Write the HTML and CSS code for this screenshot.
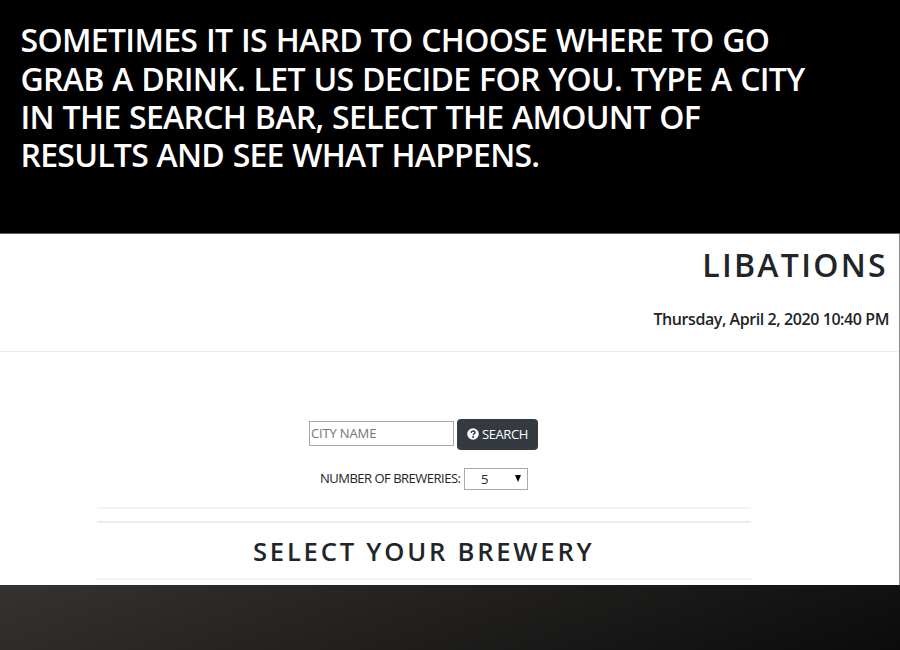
FILE: index.html
```html
<!DOCTYPE html>
<html lang="en">
<head>
<meta charset="utf-8">
<title>Libations</title>
<link rel="stylesheet" href="styles.css">
</head>
<body>
<div class="page">
  <header class="intro">
    <h2 class="intro-text">
      <span class="line line-1">SOMETIMES IT IS HARD TO CHOOSE WHERE TO GO</span>
      <span class="line line-2">GRAB A DRINK. LET US DECIDE FOR YOU. TYPE A CITY</span>
      <span class="line line-3">IN THE SEARCH BAR, SELECT THE AMOUNT OF</span>
      <span class="line line-4">RESULTS AND SEE WHAT HAPPENS.</span>
    </h2>
  </header>
  <section class="brand">
    <h1 class="brand-name">LIBATIONS</h1>
    <p class="date">Thursday, April 2, 2020 10:40 PM</p>
  </section>
  <main class="content">
    <form class="search">
      <div class="search-row">
        <input class="city" type="text" placeholder="CITY NAME">
        <button class="search-button" type="button">
          <svg class="icon" viewBox="0 0 12 12"><circle cx="6" cy="6" r="5.8" fill="#fff"/><path d="M4.1 4.8C4.3 3.5 5 2.9 6.1 2.9C7.3 2.9 8 3.6 8 4.5C8 5.8 6.2 5.7 6.2 7.2" fill="none" stroke="#343a40" stroke-width="1.5"/><circle cx="6.15" cy="9" r="1" fill="#343a40"/></svg>
          <span class="search-label">SEARCH</span>
        </button>
      </div>
      <div class="count-row">
        <span class="count-label">NUMBER OF BREWERIES:</span>
        <div class="count-select"><span class="count-value">5</span><svg class="arrow" viewBox="0 0 6 7"><path d="M0 0H6L3 7Z"/></svg></div>
      </div>
    </form>
    <div class="results">
      <h2 class="results-title">SELECT YOUR BREWERY</h2>
    </div>
  </main>
</div>
<footer class="footer"></footer>
</body>
</html>
```
FILE: styles.css
```css
* { box-sizing: border-box; }
body {
  margin: 0;
  height: 650px;
  overflow: hidden;
  font-family: "Open Sans", "Noto Sans", sans-serif;
  color: #212529;
  background: #111;
}
h1, h2, p { margin: 0; }
.page {
  height: 585px;
  background: linear-gradient(#888, #888) right / 1px 100% no-repeat #fff;
}
.intro {
  height: 234px;
  padding: 21.2px 0 0 20.5px;
  background: #000;
  border-bottom: 1px solid #606060;
}
.intro-text {
  color: #fff;
  font-size: 32px;
  font-weight: 600;
  line-height: 38.4px;
}
.line { display: block; width: max-content; white-space: nowrap; word-spacing: 1px; }
.line-1 { letter-spacing: -.68px; }
.line-2 { letter-spacing: -.7px; }
.line-3 { letter-spacing: -.7px; }
.line-4 { letter-spacing: -.74px; }
.brand {
  display: flex;
  flex-direction: column;
  align-items: flex-end;
  height: 118px;
  padding: 11px 11px 0 0;
  border-bottom: 1px solid #ebebeb;
  margin-right: 1px;
}
.brand-name {
  font-size: 32px;
  font-weight: 600;
  line-height: 40px;
  letter-spacing: 2.3px;
}
.date {
  margin: 24px -1px 0 0;
  font-size: 16px;
  font-weight: 600;
  line-height: 20px;
  letter-spacing: -.42px;
}
.content { width: 654px; margin-left: 97px; }
.search {
  height: 157px;
  padding-top: 67px;
  border-bottom: 2px solid #f3f3f3;
}
.search-row { display: flex; align-items: flex-start; margin-left: 212px; gap: 3px; }
.city {
  width: 145px;
  height: 25px;
  margin-top: 2px;
  padding: 0 1px 2px;
  border: 1px solid #a9a9a9;
  border-radius: 0;
  font: 13px "Open Sans", sans-serif;
  letter-spacing: -.15px;
  background: #fff;
}
.city::placeholder { color: #757575; }
.search-button {
  display: flex;
  align-items: center;
  gap: 3px;
  width: 81px;
  height: 31px;
  padding: 0 0 1px 10px;
  border: 0;
  border-radius: 4px;
  background: #343a40;
  color: #fff;
  font: 13px "Open Sans", sans-serif;
  letter-spacing: -.4px;
}
.icon { width: 12px; height: 12px; flex: none; }
.count-row { display: flex; margin: 18px 0 0 223px; }
.count-label {
  width: 144px;
  font-size: 13px;
  line-height: 21px;
  letter-spacing: -.5px;
  white-space: nowrap;
}
.count-select {
  display: flex;
  align-items: center;
  justify-content: space-between;
  width: 64px;
  height: 22px;
  padding: 0 6px 1px 16px;
  border: 1px solid #a9a9a9;
  font-size: 13px;
}
.arrow { width: 6px; height: 7px; }
.results {
  height: 59px;
  margin-top: 12px;
  border-top: 2px solid #ececec;
  border-bottom: 2px solid #f3f3f3;
}
.results-title {
  width: max-content;
  margin-left: 156px;
  padding-top: 13px;
  font-size: 25.6px;
  font-weight: 600;
  line-height: 31px;
  letter-spacing: 2.78px;
}
.footer {
  height: 65px;
  background: linear-gradient(160deg, #353331 0%, #0b0b0b 100%);
}
```
